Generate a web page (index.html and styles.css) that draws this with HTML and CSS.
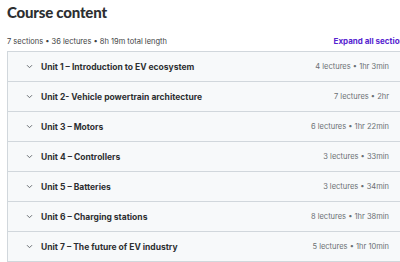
FILE: index.html
```html
<!DOCTYPE html>
<html lang="en">
<head>
  <meta charset="UTF-8">
  <title>Course content</title>
  <link rel="stylesheet" href="styles.css">
</head>
<body>
  <div class="page">
    <h2 class="title">Course content</h2>
    <div class="summary">
      <span>7 sections • 36 lectures • 8h 19m total length</span>
      <button class="expand">Expand all sections</button>
    </div>
    <div class="sections">
      <div class="section">
        <span class="chev"><svg width="7" height="5" viewBox="0 0 7 5"><path d="M1 1.2l2.5 2.5 2.5-2.5" fill="none" stroke="#6a6f73" stroke-width="1"/></svg></span>
        <span class="name">Unit 1 – Introduction to EV ecosystem</span>
        <span class="meta">4 lectures • 1hr 3min</span>
      </div>
      <div class="section">
        <span class="chev"><svg width="7" height="5" viewBox="0 0 7 5"><path d="M1 1.2l2.5 2.5 2.5-2.5" fill="none" stroke="#6a6f73" stroke-width="1"/></svg></span>
        <span class="name">Unit 2- Vehicle powertrain architecture</span>
        <span class="meta">7 lectures • 2hr</span>
      </div>
      <div class="section">
        <span class="chev"><svg width="7" height="5" viewBox="0 0 7 5"><path d="M1 1.2l2.5 2.5 2.5-2.5" fill="none" stroke="#6a6f73" stroke-width="1"/></svg></span>
        <span class="name">Unit 3 – Motors</span>
        <span class="meta">6 lectures • 1hr 22min</span>
      </div>
      <div class="section">
        <span class="chev"><svg width="7" height="5" viewBox="0 0 7 5"><path d="M1 1.2l2.5 2.5 2.5-2.5" fill="none" stroke="#6a6f73" stroke-width="1"/></svg></span>
        <span class="name">Unit 4 – Controllers</span>
        <span class="meta">3 lectures • 33min</span>
      </div>
      <div class="section">
        <span class="chev"><svg width="7" height="5" viewBox="0 0 7 5"><path d="M1 1.2l2.5 2.5 2.5-2.5" fill="none" stroke="#6a6f73" stroke-width="1"/></svg></span>
        <span class="name">Unit 5 – Batteries</span>
        <span class="meta">3 lectures • 34min</span>
      </div>
      <div class="section">
        <span class="chev"><svg width="7" height="5" viewBox="0 0 7 5"><path d="M1 1.2l2.5 2.5 2.5-2.5" fill="none" stroke="#6a6f73" stroke-width="1"/></svg></span>
        <span class="name">Unit 6 – Charging stations</span>
        <span class="meta">8 lectures • 1hr 38min</span>
      </div>
      <div class="section">
        <span class="chev"><svg width="7" height="5" viewBox="0 0 7 5"><path d="M1 1.2l2.5 2.5 2.5-2.5" fill="none" stroke="#6a6f73" stroke-width="1"/></svg></span>
        <span class="name">Unit 7 – The future of EV industry</span>
        <span class="meta">5 lectures • 1hr 10min</span>
      </div>
    </div>
  </div>
</body>
</html>
```

FILE: styles.css
```css
body {
  margin: 0;
  background: #ffffff;
  color: #2d2f31;
  font-family: Inter, "Noto Sans", sans-serif;
  overflow: hidden;
}
.page {
  width: 402px;
  padding: 0 0 0 7px;
}
.title {
  margin: 0;
  padding-top: 2px;
  font-family: Lato, "Noto Sans", sans-serif;
  font-size: 15px;
  font-weight: 900;
  line-height: 20px;
  letter-spacing: -0.2px;
}
.summary {
  display: flex;
  justify-content: space-between;
  align-items: center;
  height: 14px;
  margin-top: 12px;
  margin-bottom: 3px;
  font-size: 7.5px;
  color: #3e4143;
}
.expand {
  border: none;
  background: none;
  padding: 0;
  font: inherit;
  font-size: 8px;
  font-weight: 700;
  color: #5624d0;
  white-space: nowrap;
}
.sections {
  border: 1px solid #d1d7dc;
  border-bottom: none;
}
.section {
  display: flex;
  align-items: center;
  height: 29px;
  padding: 0 19px 0 18px;
  background: #f7f9fa;
  border-bottom: 1px solid #d1d7dc;
  font-size: 8.5px;
}
.chev {
  display: flex;
  width: 15px;
}
.name {
  flex: 1;
  font-weight: 700;
}
.meta {
  font-size: 7.5px;
  color: #6a6f73;
}
```
